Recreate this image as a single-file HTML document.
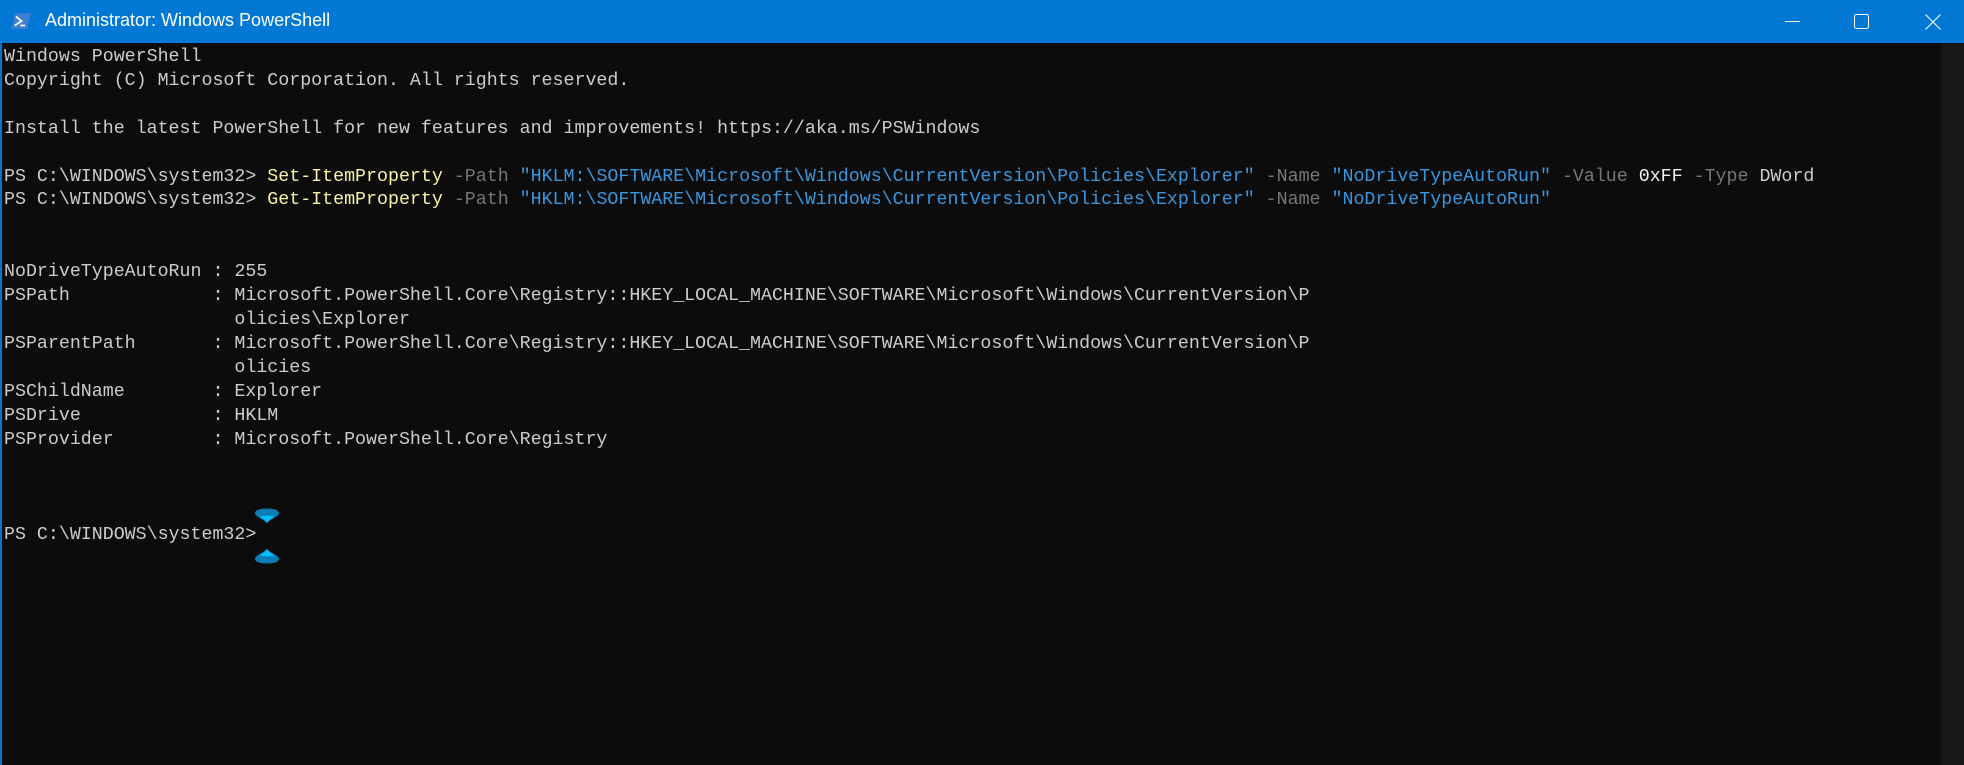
<!DOCTYPE html>
<html><head><meta charset="utf-8"><style>
html,body{margin:0;padding:0;width:1964px;height:765px;overflow:hidden;background:#0c0c0c}
#tb{position:absolute;left:0;top:0;width:1964px;height:43px;background:#0078d4}
#tt{position:absolute;left:45px;top:10px;font:18px "Liberation Sans",sans-serif;color:#fff;white-space:nowrap}
#lb{position:absolute;left:0;top:43px;width:2px;height:722px;background:#0078d4}
#sb{position:absolute;left:1941px;top:43px;width:23px;height:722px;background:#171717}
#th{position:absolute;left:1952px;top:70px;width:5px;height:26px;background:#999;border-radius:3px}
pre{position:absolute;left:4px;top:46px;margin:0;font:18.3px/23.9px "Liberation Mono",monospace;color:#cccccc}
.y{color:#f9f1a5}.g{color:#767676}.b{color:#3a96dd}.w{color:#f2f2f2}
</style></head><body>
<div id="tb">
<svg style="position:absolute;left:11px;top:12px" width="20" height="18" viewBox="0 0 17 16"><path d="M3 1h14l-3 14H0z" fill="#3b7fd0"/><path d="M4 4l5 4-6 4" stroke="#fff" stroke-width="1.6" fill="none"/><path d="M8 12h4" stroke="#fff" stroke-width="1.6"/></svg>
<div id="tt">Administrator: Windows PowerShell</div>
<svg style="position:absolute;left:1785px;top:21px" width="15" height="2"><rect width="15" height="1" fill="#fff"/></svg>
<svg style="position:absolute;left:1854px;top:14px" width="15" height="15"><rect x="0.5" y="0.5" width="14" height="14" rx="2" fill="none" stroke="#fff"/></svg>
<svg style="position:absolute;left:1925px;top:14px" width="16" height="16"><path d="M0.5 0.5L15.5 15.5M15.5 0.5L0.5 15.5" stroke="#fff" stroke-width="1.1"/></svg>
</div>
<div id="lb"></div>
<div id="sb"><div id="th"></div></div>
<pre>Windows PowerShell
Copyright (C) Microsoft Corporation. All rights reserved.

Install the latest PowerShell for new features and improvements! https://aka.ms/PSWindows

PS C:\WINDOWS\system32&gt; <span class="y">Set-ItemProperty</span> <span class="g">-Path</span> <span class="b">"HKLM:\SOFTWARE\Microsoft\Windows\CurrentVersion\Policies\Explorer"</span> <span class="g">-Name</span> <span class="b">"NoDriveTypeAutoRun"</span> <span class="g">-Value</span> <span class="w">0xFF</span> <span class="g">-Type</span> DWord
PS C:\WINDOWS\system32&gt; <span class="y">Get-ItemProperty</span> <span class="g">-Path</span> <span class="b">"HKLM:\SOFTWARE\Microsoft\Windows\CurrentVersion\Policies\Explorer"</span> <span class="g">-Name</span> <span class="b">"NoDriveTypeAutoRun"</span>


NoDriveTypeAutoRun : 255
PSPath             : Microsoft.PowerShell.Core\Registry::HKEY_LOCAL_MACHINE\SOFTWARE\Microsoft\Windows\CurrentVersion\P
                     olicies\Explorer
PSParentPath       : Microsoft.PowerShell.Core\Registry::HKEY_LOCAL_MACHINE\SOFTWARE\Microsoft\Windows\CurrentVersion\P
                     olicies
PSChildName        : Explorer
PSDrive            : HKLM
PSProvider         : Microsoft.PowerShell.Core\Registry



PS C:\WINDOWS\system32&gt;</pre>
<svg style="position:absolute;left:254px;top:505px" width="26" height="62" viewBox="0 0 26 62">
<path d="M1 8C1 2 25 2 25 8C25 12 17 13 13 18C9 13 1 12 1 8z" fill="#0a7fb5"/>
<path d="M5 12Q13 9 21 12Q16 14 13 18Q10 14 5 12z" fill="#00bfff"/>
<path d="M1 54C1 60 25 60 25 54C25 50 17 49 13 44C9 49 1 50 1 54z" fill="#0a7fb5"/>
<path d="M5 50Q13 53 21 50Q16 48 13 44Q10 48 5 50z" fill="#00bfff"/>
</svg>
</body></html>
